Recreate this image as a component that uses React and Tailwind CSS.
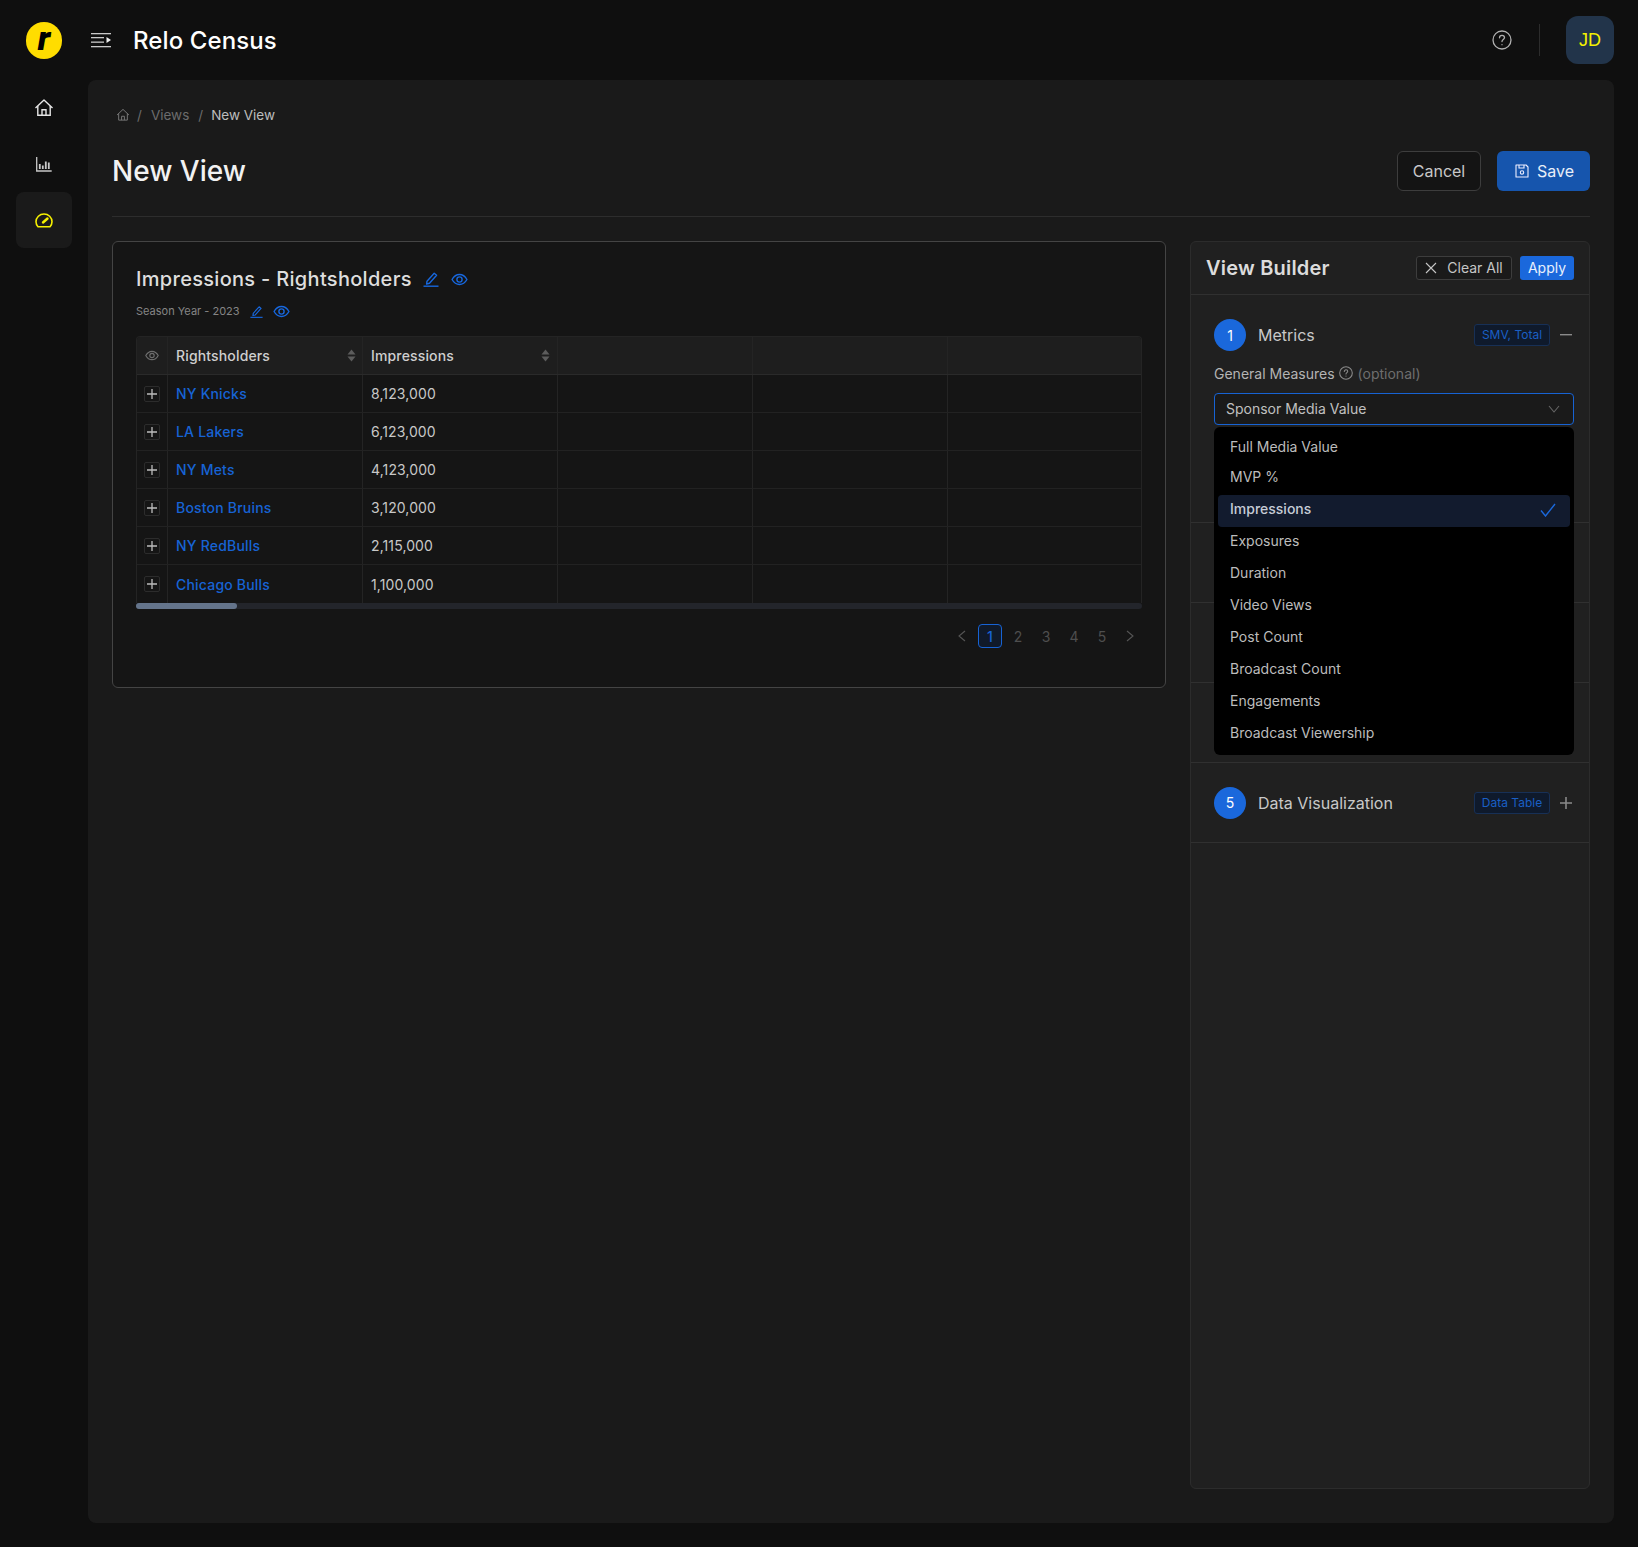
import React from "react";

const HomeI = ({ s = 20, className }) => (
  <svg width={s} height={s} viewBox="0 0 20 20" fill="none" stroke="currentColor" strokeWidth="1.4" className={className}>
    <path d="M1.5 10 10 2l8.5 8" strokeLinejoin="round" />
    <path d="M3.8 8v9.3h12.4V8" />
    <path d="M8 17.3v-5.5h4v5.5" />
  </svg>
);
const Pen = ({ s = 16, className }) => (
  <svg width={s} height={s} viewBox="0 0 16 16" fill="none" stroke="currentColor" strokeWidth="1.4" strokeLinejoin="round" className={className}>
    <path d="M4 10.2 11.2 2.2l2.4 2.1-7.1 8-2.9.7z" />
    <path d="M0.5 15.2h15" />
  </svg>
);
const Eye = ({ w = 17, h = 13, className }) => (
  <svg width={w} height={h} viewBox="0 0 18 14" fill="none" stroke="currentColor" strokeWidth="1.5" className={className}>
    <path d="M1 7c2-3.6 4.8-5.4 8-5.4S15 3.4 17 7c-2 3.6-4.8 5.4-8 5.4S3 10.600 1 7z" strokeLinejoin="round" />
    <circle cx="9" cy="7" r="2.800" />
  </svg>
);
const Sort = () => (
  <svg width="9" height="13" viewBox="0 0 9 13" fill="#5c5c5c"><path d="M4.500 0.500 8.500 5.500H.5z" /><path d="M4.500 12.500.5 7.500h8z" /></svg>
);
const Plus = ({ s = 10, className }) => (
  <svg width={s} height={s} viewBox="0 0 10 10" stroke="currentColor" strokeWidth="1.3" className={className}><path d="M5 0v10M0 5h10" /></svg>
);

const rows = [
  ["NY Knicks", "8,123,000"],
  ["LA Lakers", "6,123,000"],
  ["NY Mets", "4,123,000"],
  ["Boston Bruins", "3,120,000"],
  ["NY RedBulls", "2,115,000"],
  ["Chicago Bulls", "1,100,000"],
];
const options = ["Exposures", "Duration", "Video Views", "Post Count", "Broadcast Count", "Engagements", "Broadcast Viewership"];
const grid = "grid grid-cols-[31px_195px_195px_195px_195px_1fr]";
const cell = "border-r border-[#242424] last:border-r-0 flex items-center";

function Badge({ children, w }) {
  return <span className={`h-[22px] ${w} rounded-[3px] border border-[#173056] bg-[#0f1a2c] text-[#1a5fc4] text-[12px] flex items-center justify-center`}>{children}</span>;
}

export default function App() {
  return (
    <div className="w-[1638px] h-[1547px] bg-[#0f0f0f] text-[#d6d6d6] overflow-hidden flex flex-col [font-family:Inter,'Noto_Sans',sans-serif]">
      <header className="h-[80px] shrink-0 flex items-center pl-[26px] pr-[24px]">
        <div className="w-[36px] h-[37px] rounded-full bg-[#ffdd00] flex items-center justify-center text-black text-[34px] font-black italic leading-none [font-family:Roboto,sans-serif] pb-[4px]">r</div>
        <svg width="20" height="15" viewBox="0 0 20 15" className="ml-[29px]" fill="#c9c9c9">
          <rect x="0" y="0" width="20" height="1.300" />
          <rect x="0" y="4" width="13" height="1.300" />
          <rect x="0" y="8.500" width="13" height="1.300" />
          <rect x="0" y="13" width="20" height="1.300" />
          <path d="M15.500 4 20 7l-4.500 3z" fill="#eee" />
        </svg>
        <div className="ml-[22px] pt-[2px] text-[24px] font-medium tracking-[0.1px] text-white leading-none">Relo Census</div>
        <div className="ml-auto flex items-center">
          <svg width="20" height="20" viewBox="0 0 20 20" fill="none" stroke="#b0b0b0" strokeWidth="1.300" strokeLinecap="round">
            <circle cx="10" cy="10" r="9" />
            <path d="M7.500 7.800c0-1.500 1.100-2.500 2.500-2.500s2.500 1 2.500 2.300c0 1.900-2.500 2-2.500 3.900" />
            <path d="M10 14.600v.1" />
          </svg>
          <div className="w-px h-[32px] bg-[#2c2c2c] ml-[27px] mr-[26px]" />
          <div className="w-[48px] h-[48px] rounded-[12px] bg-[#22344a] flex items-center justify-center text-[#f5f000] text-[18px] [font-family:'Liberation_Sans',sans-serif]">JD</div>
        </div>
      </header>

      <div className="flex flex-1 min-h-0">
        <aside className="w-[88px] shrink-0 flex flex-col items-center pt-[0px]">
          <div className="h-[56px] w-[56px] flex items-center justify-center"><HomeI className="text-[#e6e6e6]" s={20} /></div>
          <div className="h-[56px] w-[56px] flex items-center justify-center">
            <svg width="16" height="16" viewBox="0 0 16 16" fill="none" stroke="#c8c8c8" strokeWidth="1.300">
              <path d="M.7 1v14h15" />
              <path d="M3.800 8v5M6.800 9.500v3.500M9.800 5.500v7.500M12.800 6.500v6.500" strokeWidth="1.800" />
            </svg>
          </div>
          <div className="h-[56px] w-[56px] rounded-[8px] bg-[#1a1a1a] flex items-center justify-center">
            <svg width="18" height="15" viewBox="0 0 18 15" fill="none" stroke="#f5f000" strokeWidth="1.600" strokeLinecap="round" strokeLinejoin="round">
              <path d="M3 13.800h12c1.200-1.300 2-3 2-5C17 4.300 13.400 1 9 1S1 4.300 1 8.800c0 2 .8 3.700 2 5z" />
              <path d="M8 9.500 12.500 5.500" strokeWidth="2.400" />
            </svg>
          </div>
        </aside>

        <main className="w-[1526px] h-[1443px] rounded-[8px] bg-[#1a1a1a] px-[24px] flex flex-col">
          <nav className="h-[26px] mt-[22px] flex items-center text-[13.5px] text-[#6c6c6c] pl-[4px]">
            <HomeI s={14} className="text-[#777]" />
            <span className="ml-[7px]">/</span>
            <span className="ml-[9px]">Views</span>
            <span className="ml-[9px]">/</span>
            <span className="ml-[8px] text-[#bdbdbd]">New View</span>
          </nav>
          <div className="h-[40px] mt-[23px] flex items-center justify-between">
            <h1 className="text-[28px] font-medium text-[#f2f2f2] leading-none">New View</h1>
            <div className="flex gap-[16px]">
              <button className="w-[84px] h-[40px] rounded-[6px] border border-[#3d3d3d] bg-[#141414] text-[16px] text-[#c8c8c8]">Cancel</button>
              <button className="w-[93px] h-[40px] rounded-[6px] bg-[#1655ad] text-[16px] text-[#e8eef8] flex items-center justify-center gap-[8px] pl-[2px]">
                <svg width="14" height="14" viewBox="0 0 14 14" fill="none" stroke="#eef" strokeWidth="1.100"><path d="M1 1h10l2 2v10H1z" strokeLinejoin="round" /><path d="M4 1v3h5V1" /><circle cx="7" cy="8.500" r="1.700" /></svg>
                Save
              </button>
            </div>
          </div>
          <div className="h-px bg-[#2d2d2d] mt-[25px]" />

          <div className="flex justify-between mt-[24px] items-start">
            <section className="w-[1054px] h-[447px] rounded-[6px] border border-[#444] bg-[#151515] px-[23px] pt-[24px]">
              <div className="flex items-center h-[26px]">
                <h2 className="text-[20px] font-medium tracking-[0.3px] text-[#dedede] leading-none">Impressions - Rightsholders</h2>
                <Pen className="ml-[11px] text-[#1767dd]" />
                <Eye className="ml-[12px] text-[#1767dd]" />
              </div>
              <div className="flex items-center h-[18px] mt-[10px]">
                <span className="text-[11px] text-[#858585]">Season Year - 2023</span>
                <Pen s={13} className="ml-[10px] text-[#1767dd]" />
                <Eye className="ml-[10px] text-[#1767dd]" />
              </div>

              <div className="mt-[16px] w-[1006px]">
                <div className="rounded-t-[4px] border-l border-r border-t border-[#242424] overflow-hidden">
                  <div className={`${grid} h-[38px] bg-[#1e1e1e] border-b border-[#2a2a2a] text-[14px] font-medium tracking-[0.15px] text-[#cfcfcf]`}>
                    <div className={`${cell} justify-center`}><Eye w={14} h={11} className="text-[#6d6d6d]" /></div>
                    <div className={`${cell} justify-between pl-[8px] pr-[6px]`}>Rightsholders<Sort /></div>
                    <div className={`${cell} justify-between pl-[8px] pr-[7px]`}>Impressions<Sort /></div>
                    <div className={cell} /><div className={cell} /><div className={cell} />
                  </div>
                  {rows.map(([n, v], i) => (
                    <div key={n} className={`${grid} h-[38px] text-[14px] ${i < 5 ? "border-b border-[#222]" : ""}`}>
                      <div className={`${cell} justify-center`}>
                        <span className="w-[16px] h-[16px] rounded-[2px] border border-[#2c2c2c] flex items-center justify-center text-[#bdbdbd]"><Plus /></span>
                      </div>
                      <div className={`${cell} pl-[8px] text-[#1763d4] font-medium tracking-[0.2px]`}>{n}</div>
                      <div className={`${cell} pl-[8px] text-[#c8c8c8] tracking-[0.1px]`}>{v}</div>
                      <div className={cell} /><div className={cell} /><div className={cell} />
                    </div>
                  ))}
                </div>
                <div className="h-[6px] rounded-full bg-[#23252b]"><div className="h-[6px] w-[101px] rounded-full bg-[#64748b]" /></div>
              </div>

              <div className="mt-[15px] w-[1006px] flex justify-end items-center pr-[7px] text-[14px] text-[#4e4e4e]">
                <svg width="10" height="12" viewBox="0 0 10 12" fill="none" stroke="#555" strokeWidth="1.100" className="mr-[11px]"><path d="M8 1 2 6l6 5" /></svg>
                <span className="w-[24px] h-[24px] rounded-[4px] border border-[#1763d4] bg-[#101a2a] text-[#1763d4] font-medium flex items-center justify-center">1</span>
                <span className="w-[28px] ml-[2px] text-center">2</span>
                <span className="w-[28px] text-center">3</span>
                <span className="w-[28px] text-center">4</span>
                <span className="w-[28px] text-center">5</span>
                <svg width="10" height="12" viewBox="0 0 10 12" fill="none" stroke="#555" strokeWidth="1.100" className="ml-[9px]"><path d="M2 1l6 5-6 5" /></svg>
              </div>
            </section>

            <aside className="w-[400px] h-[1248px] rounded-[6px] border border-[#2c2c2c] bg-[#202020]">
              <div className="h-[53px] border-b border-[#303030] flex items-center pl-[15px] pr-[15px]">
                <h2 className="text-[20px] font-semibold tracking-[0.2px] text-[#dcdcdc] leading-none">View Builder</h2>
                <button className="ml-auto w-[96px] h-[24px] rounded-[3px] border border-[#3d3d3d] bg-[#1a1a1a] text-[14px] text-[#c6c6c6] flex items-center justify-center gap-[10px] pb-px">
                  <svg width="12" height="12" viewBox="0 0 12 12" stroke="#c6c6c6" strokeWidth="1.100"><path d="M1 1l10 10M11 1 1 11" /></svg>
                  Clear All
                </button>
                <button className="ml-[8px] w-[54px] h-[24px] rounded-[3px] bg-[#1a68dc] text-[14px] text-[#e8f0fc] pb-px">Apply</button>
              </div>

              <div className="h-[228px] border-b border-[#303030] pl-[23px] pr-[15px] pt-[24px]">
                <div className="flex items-center h-[32px]">
                  <span className="w-[32px] h-[32px] rounded-full bg-[#1a68dc] text-white text-[14px] flex items-center justify-center">1</span>
                  <span className="ml-[12px] text-[16px] text-[#c8c8c8]">Metrics</span>
                  <span className="ml-auto"><Badge w="w-[76px]">SMV, Total</Badge></span>
                  <svg width="12" height="2" viewBox="0 0 12 2" className="ml-[10px] mr-[2px]"><rect width="12" height="1.400" fill="#8a8a8a" /></svg>
                </div>
                <div className="flex items-center h-[20px] mt-[12px] text-[14px]">
                  <span className="text-[#b4b4b4]">General Measures</span>
                  <svg width="14" height="14" viewBox="0 0 14 14" fill="none" stroke="#8a8a8a" strokeWidth="1.100" strokeLinecap="round" className="ml-[4px]">
                    <circle cx="7" cy="7" r="6.300" /><path d="M5.300 5.500C5.300 4.500 6 3.800 7 3.800s1.700.7 1.700 1.500c0 1.300-1.700 1.400-1.700 2.700" /><path d="M7 10v.1" />
                  </svg>
                  <span className="ml-[5px] text-[#6e6e6e]">(optional)</span>
                </div>
                <div className="relative mt-[10px]">
                  <div className="h-[32px] rounded-[4px] border border-[#1763d4] bg-[#1a1a1a] flex items-center pl-[11px] pr-[13px] pb-px text-[14px] text-[#c0c0c0]">
                    Sponsor Media Value
                    <svg width="12" height="8" viewBox="0 0 12 8" fill="none" stroke="#666" strokeWidth="1.100" className="ml-auto"><path d="M1 1l5 6 5-6" /></svg>
                  </div>
                  <div className="absolute left-0 right-0 top-[34px] h-[328px] rounded-[6px] bg-black z-10 px-[4px] pt-[4px] text-[14px] text-[#bcbcbc]">
                    <div className="h-[32px] pl-[12px] pb-[2px] flex items-center">Full Media Value</div>
                    <div className="h-[28px] pl-[12px] pb-[2px] flex items-center">MVP %</div>
                    <div className="h-[32px] mt-[4px] rounded-[4px] bg-[#121b2e] pl-[12px] pr-[14px] pb-[6px] flex items-center font-medium text-[#c6ccd6]">
                      Impressions
                      <svg width="16" height="14" viewBox="0 0 16 14" fill="none" stroke="#1a68dc" strokeWidth="1.400" className="ml-auto mt-[4px]"><path d="M1 7.500 5.500 13 15 1" /></svg>
                    </div>
                    <div className="-mt-[2px]">
                      {options.map((o) => <div key={o} className="h-[32px] pl-[12px] pb-[2px] flex items-center">{o}</div>)}
                    </div>
                  </div>
                </div>
              </div>
              <div className="h-[80px] border-b border-[#303030]" />
              <div className="h-[80px] border-b border-[#303030]" />
              <div className="h-[80px] border-b border-[#303030]" />
              <div className="h-[80px] border-b border-[#303030] pl-[23px] pr-[15px] flex items-center">
                <span className="w-[32px] h-[32px] rounded-full bg-[#1a68dc] text-white text-[14px] flex items-center justify-center">5</span>
                <span className="ml-[12px] text-[16px] text-[#c8c8c8]">Data Visualization</span>
                <span className="ml-auto"><Badge w="w-[76px]">Data Table</Badge></span>
                <Plus s={12} className="ml-[10px] mr-[2px] text-[#8a8a8a]" />
              </div>
            </aside>
          </div>
        </main>
      </div>
    </div>
  );
}
